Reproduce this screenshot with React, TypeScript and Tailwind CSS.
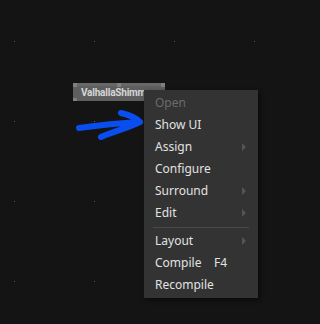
const items: { label: string; disabled?: boolean; sub?: boolean; key?: string; sepBefore?: boolean }[] = [
  { label: "Open", disabled: true },
  { label: "Show UI" },
  { label: "Assign", sub: true },
  { label: "Configure" },
  { label: "Surround", sub: true },
  { label: "Edit", sub: true },
  { label: "Layout", sub: true, sepBefore: true },
  { label: "Compile", key: "F4" },
  { label: "Recompile" },
];

export default function App() {
  return (
    <div
      className="relative w-[320px] h-[324px] overflow-hidden bg-[#141414]"
      style={{ fontFamily: '"Noto Sans", "Open Sans", sans-serif' }}
    >
      {/* grid dots */}
      <div className="grid grid-cols-[repeat(4,80px)] grid-rows-[repeat(4,80px)] pl-[14px] pt-[41px]">
        {Array.from({ length: 16 }).map((_, i) => (
          <div key={i} className="w-px h-px bg-[#5a5a5a]" />
        ))}
      </div>

      {/* node */}
      <div className="absolute left-[73px] top-[83px] w-[92px] h-[18px] bg-[#5e5e5e] border-t-[3px] border-[#686868]">
        <div className="absolute left-0 top-[-3px] w-[4px] h-[4px] bg-[#808080]" />
        <div className="absolute left-[44px] top-[-3px] w-[4px] h-[4px] bg-[#808080]" />
        <div className="absolute right-0 top-[-3px] w-[4px] h-[4px] bg-[#808080]" />
        <div className="absolute left-0 bottom-0 w-[4px] h-[3px] bg-[#808080]" />
        <div className="ml-[8px] w-[63px] overflow-hidden text-[10px] leading-[14px] font-bold tracking-[-0.2px] text-[#d6d6d6] whitespace-nowrap" style={{ fontFamily: "Roboto, sans-serif" }}>
          ValhallaShimmer
        </div>
      </div>

      {/* hand-drawn arrow */}
      <svg className="absolute left-0 top-0" width="320" height="324">
        <path
          d="M79 128 C100 125 120 123 140 122 M121 113 C130 115 136 118 140 122 C128 128 112 132 101 137"
          fill="none"
          stroke="#0a4ef0"
          strokeWidth="6"
          strokeLinecap="round"
          strokeLinejoin="round"
        />
      </svg>

      {/* context menu */}
      <div className="absolute left-[144px] top-[90px] w-[114px] py-[2px] bg-[#333333] shadow-[2px_2px_4px_rgba(0,0,0,0.5)]">
        {items.map((it) => (
          <div key={it.label}>
            {it.sepBefore && (
              <div className="h-[6px] flex items-center px-[9px]">
                <div className="h-px w-full bg-[#4a4a4a]" />
              </div>
            )}
            <div
              className={`h-[22px] flex items-center pl-[11px] pr-[12px] text-[12px] ${
                it.disabled ? "text-[#6b6b6b]" : "text-[#e2e2e2]"
              }`}
            >
              <span className="w-[59px]">{it.label}</span>
              {it.key && <span>{it.key}</span>}
              {it.sub && (
                <svg className="ml-auto" width="4" height="8" viewBox="0 0 4 8">
                  <path d="M0 0 L4 4 L0 8 Z" fill="#555555" />
                </svg>
              )}
            </div>
          </div>
        ))}
      </div>
    </div>
  );
}
